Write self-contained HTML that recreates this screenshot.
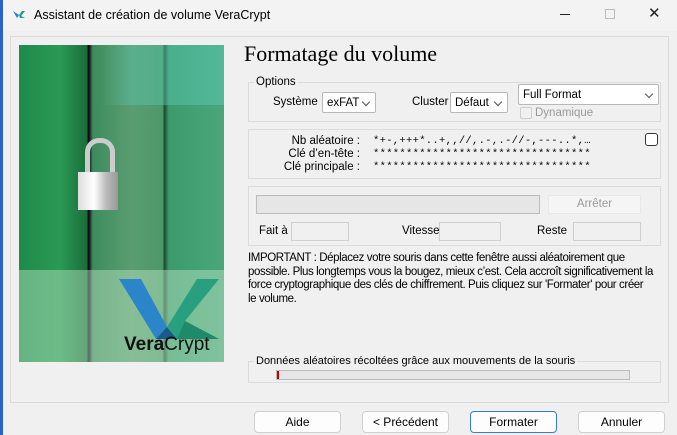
<!DOCTYPE html>
<html><head><meta charset="utf-8"><style>
*{margin:0;padding:0;box-sizing:border-box}
body{width:677px;height:435px;overflow:hidden;background:#f0f0f0;font-family:"Liberation Sans",sans-serif;font-size:11.5px;color:#000;position:relative}
.a{position:absolute}
.t{position:absolute;white-space:nowrap}
.grp{position:absolute;border:1px solid #dcdcdc}
.combo{position:absolute;background:#fff;border:1px solid #b8b8b8;border-radius:2px;padding:4px 0 0 4px}
.combo:after{content:"";position:absolute;right:6px;top:6px;width:5px;height:5px;border-right:1px solid #555;border-bottom:1px solid #555;transform:rotate(45deg)}
.box{position:absolute;border:1px solid #cfcfcf;background:#f0f0f0}
.btn{position:absolute;background:#fdfdfd;border:1px solid #d0d0d0;border-radius:4px;text-align:center;line-height:20px;font-size:12px}
.mono{font-family:"Liberation Mono",monospace;font-size:10.5px;letter-spacing:0.3px}
</style></head><body>
<div class="a" style="left:0;top:0;width:677px;height:31px;background:#f3f3f3"></div>
<div class="a" style="left:0;top:0;width:3px;height:435px;background:#2a63c8"></div>
<svg class="a" style="left:13px;top:10px" width="12" height="10"><path d="M0 1 L4 8 L6 5 Z" fill="#2b7fd6"/><path d="M6 5 L9 1 L12 1 L8 6 L12 8 L7 8Z" fill="#1f9c7a"/></svg>
<div class="t" style="left:34px;top:8px;font-size:12.5px">Assistant de création de volume VeraCrypt</div>
<div class="a" style="left:560px;top:14px;width:10px;height:1px;background:#222"></div>
<div class="a" style="left:605px;top:9px;width:10px;height:10px;border:1px solid #bbb"></div>
<div class="t" style="left:648px;top:4px;font-size:15px;color:#222">✕</div>
<div class="a" style="left:10px;top:36px;width:659px;height:367px;border:1px solid #dadada"></div>
<!-- image -->
<div class="a" style="left:19px;top:45px;width:205px;height:317px;background:linear-gradient(90deg,#1f8a4a 0,#2a9a55 20%,#1a6e3a 33%,#101 34%,#3d8c5d 36%,#5a9d70 55%,#4d9868 70%,#1a4a30 71%,#3c9a6b 73%,#4aa77a 100%);overflow:hidden">
<div class="a" style="left:0;top:0;width:205px;height:60px;background:linear-gradient(90deg,transparent 40%,rgba(90,200,180,.4) 55%,rgba(90,200,180,.5) 100%)"></div>
<div class="a" style="left:0;top:225px;width:205px;height:92px;background:rgba(190,230,200,.45)"></div>
<div class="a" style="left:66px;top:93px;width:30px;height:36px;border:5px solid #ccc;border-bottom:none;border-radius:14px 14px 0 0"></div>
<div class="a" style="left:59px;top:127px;width:40px;height:38px;background:linear-gradient(90deg,#ddd,#fff 40%,#bbb 70%,#999)"></div>
<svg class="a" style="left:100px;top:234px" width="100" height="60"><polygon points="0,0 22,0 48,48 37,60" fill="#2a86c8"/><polygon points="37,60 48,48 58,60" fill="#1a5a8a"/><polygon points="48,48 78,0 100,0 66,42 100,60 58,60" fill="#28a080"/><polygon points="66,42 100,60 58,60" fill="#1f8a6a"/></svg>
<div class="t" style="left:105px;top:289px;font-size:19px;color:#111"><b>Vera</b>Crypt</div>
</div>
<div class="t" style="left:244px;top:41px;font-family:'Liberation Serif',serif;font-size:22px">Formatage du volume</div>
<!-- options -->
<div class="grp" style="left:248px;top:82px;width:413px;height:40px"></div>
<div class="t" style="left:254px;top:76px;background:#f0f0f0;padding:0 2px">Options</div>
<div class="t" style="left:273px;top:96px">Système</div>
<div class="combo" style="left:322px;top:92px;width:54px;height:21px">exFAT</div>
<div class="t" style="left:412px;top:96px">Cluster</div>
<div class="combo" style="left:450px;top:92px;width:58px;height:21px">Défaut</div>
<div class="combo" style="left:518px;top:84px;width:141px;height:21px">Full Format</div>
<div class="a" style="left:520px;top:107px;width:12px;height:12px;border:1px solid #ccc;border-radius:2px"></div>
<div class="t" style="left:535px;top:107px;color:#999">Dynamique</div>
<!-- random -->
<div class="grp" style="left:248px;top:129px;width:413px;height:50px"></div>
<div class="t" style="left:240px;top:135px;width:120px;text-align:right;line-height:13px">Nb aléatoire :<br>Clé d’en-tête :<br>Clé principale :</div>
<div class="t mono" style="left:373px;top:135px;line-height:13px">*+-,+++*..+,,//,.-,.-//-,---..*,…<br>*********************************<br>*********************************</div>
<div class="a" style="left:645px;top:133px;width:13px;height:13px;border:1px solid #333;border-radius:3px;background:#fff"></div>
<!-- progress -->
<div class="grp" style="left:248px;top:186px;width:413px;height:60px"></div>
<div class="box" style="left:256px;top:195px;width:284px;height:19px;background:#e6e6e6;border-color:#bcbcbc"></div>
<div class="a" style="left:548px;top:195px;width:93px;height:19px;background:#f5f5f5;border:1px solid #e8e8e8;color:#999;text-align:center;line-height:17px">Arrêter</div>
<div class="t" style="left:259px;top:225px">Fait à</div>
<div class="box" style="left:291px;top:222px;width:58px;height:19px"></div>
<div class="t" style="left:402px;top:225px">Vitesse</div>
<div class="box" style="left:439px;top:222px;width:62px;height:19px"></div>
<div class="t" style="left:537px;top:225px">Reste</div>
<div class="box" style="left:573px;top:222px;width:68px;height:19px"></div>
<div class="t" style="left:248px;top:252px;font-size:11.5px;line-height:13.5px;letter-spacing:-0.4px">IMPORTANT : Déplacez votre souris dans cette fenêtre aussi aléatoirement que<br>possible. Plus longtemps vous la bougez, mieux c’est. Cela accroît significativement la<br>force cryptographique des clés de chiffrement. Puis cliquez sur 'Formater' pour créer<br>le volume.</div>
<!-- mouse -->
<div class="grp" style="left:248px;top:361px;width:413px;height:22px"></div>
<div class="t" style="left:254px;top:355px;background:#f0f0f0;padding:0 2px;font-size:11px">Données aléatoires récoltées grâce aux mouvements de la souris</div>
<div class="box" style="left:276px;top:370px;width:354px;height:10px;background:#e6e6e6;border-color:#bcbcbc"></div>
<div class="a" style="left:277px;top:371px;width:2px;height:8px;background:#c00"></div>
<!-- buttons -->
<div class="btn" style="left:254px;top:411px;width:87px;height:22px">Aide</div>
<div class="btn" style="left:362px;top:411px;width:87px;height:22px">&lt; Précédent</div>
<div class="btn" style="left:470px;top:411px;width:87px;height:22px;border-color:#3a7bd5">Formater</div>
<div class="btn" style="left:578px;top:411px;width:87px;height:22px">Annuler</div>
</body></html>
